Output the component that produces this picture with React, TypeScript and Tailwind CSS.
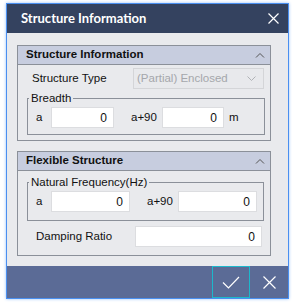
import React from "react";

const font = { fontFamily: '"Liberation Sans", Arial, sans-serif' };
const titleFont = { fontFamily: 'Lato, "Noto Sans", sans-serif' };

function Chevron() {
  return (
    <svg width="10" height="6" viewBox="0 0 10 6" className="text-[#555]">
      <path d="M1 5.5 L5 1.5 L9 5.5" fill="none" stroke="currentColor" strokeWidth="1" />
    </svg>
  );
}

function Header({ title }: { title: string }) {
  return (
    <div className="h-[19px] bg-[#c7cddf] border-b border-[#8b9099] flex items-center justify-between pl-[8px] pr-[5px]">
      <span className="text-[11.5px] font-bold text-[#111] leading-none">{title}</span>
      <Chevron />
    </div>
  );
}

function Num({ w }: { w: string }) {
  return (
    <div className={`${w} h-[21px] bg-white border border-[#dcdde0] flex items-center justify-end pr-[6px] text-[12px] text-[#111]`}>
      0
    </div>
  );
}

export default function App() {
  return (
    <div className="w-[292px] h-[304px] bg-white pt-[3px] pl-[6px]" style={font}>
      <div className="w-[283px] h-[296px] border border-[#4a8ff0] flex flex-col shadow-[0_0_3px_#9cc2f7]">
        <div className="h-[29px] bg-[#34425f] flex items-center justify-between pl-[14px] pr-[9px]">
          <span className="text-white text-[13px] font-bold" style={titleFont}>Structure Information</span>
          <svg width="11" height="11" viewBox="0 0 11 11">
            <path d="M0.5 0.5 L10.5 10.5 M10.5 0.5 L0.5 10.5" stroke="white" strokeWidth="1.2" />
          </svg>
        </div>
        <div className="flex-1 bg-[#e9eaed] pl-[10px] pt-[12px] flex flex-col gap-[10px] text-[#111] text-[11.5px]">
          <div className="w-[254px] h-[96px] border border-[#8b9099] flex flex-col">
            <Header title="Structure Information" />
            <div className="flex items-center mt-[3px] h-[21px] pl-[14px]">
              <span className="w-[101px]">Structure Type</span>
              <div className="w-[131px] h-[21px] border border-[#d4d5d8] bg-[#e8e9ec] flex items-center justify-between pl-[3px] pr-[7px] text-[#a5a7ab]">
                <span>(Partial) Enclosed</span>
                <svg width="9" height="5" viewBox="0 0 9 5">
                  <path d="M0.5 0.5 L4.5 4.5 L8.5 0.5" fill="none" stroke="#b0b2b6" strokeWidth="1" />
                </svg>
              </div>
            </div>
            <fieldset className="ml-[9px] mt-[2px] w-[238px] h-[44px] border border-[#8b9099]">
              <legend className="ml-[1px] px-[2px] leading-[14px]">Breadth</legend>
              <div className="flex items-center pt-[2px] pl-[8px]">
                <span className="w-[15px]">a</span>
                <Num w="w-[63px]" />
                <span className="ml-[17px] w-[31px]">a+90</span>
                <Num w="w-[62px]" />
                <span className="ml-[5px]">m</span>
              </div>
            </fieldset>
          </div>
          <div className="w-[254px] h-[105px] border border-[#8b9099] flex flex-col">
            <Header title="Flexible Structure" />
            <fieldset className="ml-[9px] mt-[4px] w-[237px] h-[46px] border border-[#8b9099]">
              <legend className="ml-[1px] px-[2px] leading-[14px]">Natural Frequency(Hz)</legend>
              <div className="flex items-center pt-[2px] pl-[8px]">
                <span className="w-[15px]">a</span>
                <Num w="w-[79px]" />
                <span className="ml-[17px] w-[31px]">a+90</span>
                <Num w="w-[79px]" />
              </div>
            </fieldset>
            <div className="flex items-center mt-[5px] pl-[18px]">
              <span className="w-[99px]">Damping Ratio</span>
              <Num w="w-[127px]" />
            </div>
          </div>
        </div>
        <div className="h-[32px] bg-[#5b6b96] flex items-center justify-end">
          <div className="w-[38px] h-[32px] border border-[#1cb8cc] flex items-center justify-center">
            <svg width="18" height="13" viewBox="0 0 18 13">
              <path d="M1 6.5 L6.5 12 L17 1" fill="none" stroke="white" strokeWidth="1.2" />
            </svg>
          </div>
          <div className="w-[38px] h-[32px] flex items-center justify-center">
            <svg width="13" height="13" viewBox="0 0 13 13">
              <path d="M0.5 0.5 L12.5 12.5 M12.5 0.5 L0.5 12.5" stroke="white" strokeWidth="1.2" />
            </svg>
          </div>
        </div>
      </div>
    </div>
  );
}
